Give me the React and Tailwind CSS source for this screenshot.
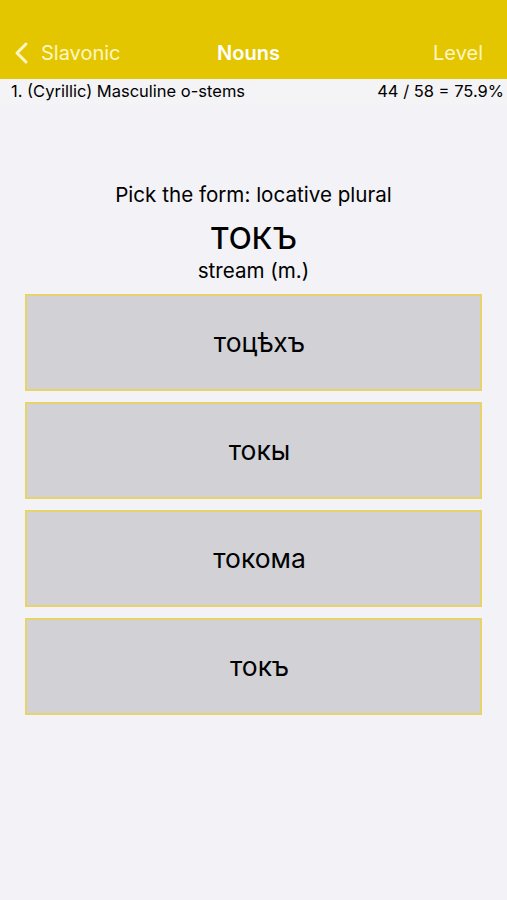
import React from "react";

const options = ["тоцѣхъ", "токы", "токома", "токъ"];

export default function App() {
  return (
    <div className="w-[507px] h-[900px] bg-[#f2f2f7] flex flex-col" style={{ fontFamily: '"Inter", "Liberation Sans", sans-serif' }}>
      <div className="h-[79px] bg-[#e3c600] flex items-end pb-[11px] pl-[14px] pr-[24px] shrink-0">
        <div className="flex-1 flex items-center gap-[11px] text-[#fff6c4] text-[20px]">
          <svg width="16" height="24" viewBox="0 0 16 24" fill="none" stroke="#fff6c4" strokeWidth="3" strokeLinecap="round" strokeLinejoin="round">
            <path d="M12 3 L3 12 L12 21" />
          </svg>
          <span>Slavonic</span>
        </div>
        <div className="flex-1 text-center text-white text-[20px] font-semibold">Nouns</div>
        <div className="flex-1 text-right text-[#fff6c4] text-[20px]">Level</div>
      </div>
      <div className="h-[25px] flex items-center justify-between pl-[11px] pr-[3px] text-[16.5px] text-black bg-[#f4f4f7]">
        <span>1. (Cyrillic) Masculine o-stems</span>
        <span>44 / 58 = 75.9%</span>
      </div>
      <div className="flex flex-col items-center pt-[79px]">
        <div className="text-[20.6px] text-black leading-[24px]">Pick the form: locative plural</div>
        <div className="text-[30px] font-medium text-black leading-[36px] mt-[13px]">ТОКЪ</div>
        <div className="text-[20.6px] text-black leading-[24px] mt-[3px]">stream (m.)</div>
      </div>
      <div className="flex flex-col gap-[11px] px-[25px] mt-[11px]">
        {options.map((o, i) => (
          <div key={i} className="h-[97px] bg-[#d1d1d6] border-2 border-[#e6d46a] flex items-center justify-center pl-[12px] text-[26.5px] text-black">
            {o}
          </div>
        ))}
      </div>
    </div>
  );
}
